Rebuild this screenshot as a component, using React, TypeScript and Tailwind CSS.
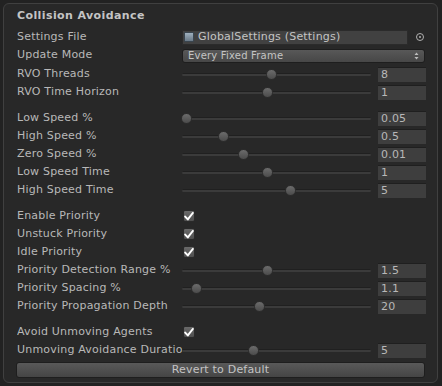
import React from 'react';

type Row =
  | { kind: 'slider'; label: string; value: string; thumb: number }
  | { kind: 'check'; label: string };

const groups: Row[][] = [
  [
    { kind: 'slider', label: 'Low Speed %', value: '0.05', thumb: 186 },
    { kind: 'slider', label: 'High Speed %', value: '0.5', thumb: 223 },
    { kind: 'slider', label: 'Zero Speed %', value: '0.01', thumb: 243 },
    { kind: 'slider', label: 'Low Speed Time', value: '1', thumb: 267 },
    { kind: 'slider', label: 'High Speed Time', value: '5', thumb: 290 },
  ],
  [
    { kind: 'check', label: 'Enable Priority' },
    { kind: 'check', label: 'Unstuck Priority' },
    { kind: 'check', label: 'Idle Priority' },
    { kind: 'slider', label: 'Priority Detection Range %', value: '1.5', thumb: 267 },
    { kind: 'slider', label: 'Priority Spacing %', value: '1.1', thumb: 196 },
    { kind: 'slider', label: 'Priority Propagation Depth', value: '20', thumb: 259 },
  ],
  [
    { kind: 'check', label: 'Avoid Unmoving Agents' },
    { kind: 'slider', label: 'Unmoving Avoidance Duratio', value: '5', thumb: 253 },
  ],
];

function Label({ children }: { children: React.ReactNode }) {
  return <div className="w-[165px] shrink-0 overflow-hidden whitespace-nowrap">{children}</div>;
}

function Slider({ value, thumb }: { value: string; thumb: number }) {
  return (
    <div className="flex items-center">
      <div className="relative w-[189px] h-[10px] flex items-center">
        <div className="w-full h-[3px] rounded-full bg-[#3b3b3b] border-t border-[#202020]" />
        <div
          className="absolute top-0 w-[11px] h-[11px] rounded-full border border-[#2e2e2e] bg-gradient-to-b from-[#6c6c6c] to-[#4c4c4c]"
          style={{ left: thumb - 182 - 5.5 }}
        />
      </div>
      <div className="ml-[7px] w-[48px] h-[15px] bg-[#3e3e3e] border-t border-[#1f1f1f] pl-[3px] leading-[14px] text-[#b8b8b8]">
        {value}
      </div>
    </div>
  );
}

function Check() {
  return (
    <div className="ml-[1px] w-[12px] h-[12px] rounded-[2px] border border-[#2a2a2a] bg-gradient-to-b from-[#6a6a6a] to-[#4f4f4f] flex items-center justify-center">
      <svg width="10" height="9" viewBox="0 0 10 9">
        <path d="M1.2 4.6 L3.8 7.4 L8.8 1" stroke="#ffffff" strokeWidth="2" fill="none" strokeLinecap="round" strokeLinejoin="round" />
      </svg>
    </div>
  );
}

function FieldRow({ row }: { row: Row }) {
  return (
    <div className="h-[18px] flex items-center">
      <Label>{row.label}</Label>
      {row.kind === 'slider' ? <Slider value={row.value} thumb={row.thumb} /> : <Check />}
    </div>
  );
}

export default function App() {
  return (
    <div
      className="w-[442px] h-[386px] bg-[#222222] p-[3px] text-[11px] tracking-[0.2px] text-[#b8b8b8]"
      style={{ fontFamily: '"DejaVu Sans", Verdana, sans-serif' }}
    >
      <div className="h-[380px] w-[435px] rounded-[6px] border border-[#404040] bg-[#282828] pl-[13px] pt-[3px]">
        <div className="h-[18px] flex items-center font-bold tracking-[0.4px] text-[#c4c4c4]">Collision Avoidance</div>

        <div className="mt-[3px] h-[18px] flex items-center">
          <Label>Settings File</Label>
          <div className="w-[226px] h-[15px] bg-[#414141] border border-[#2b2b2b] flex items-center pl-[1px]">
            <div className="w-[10px] h-[10px] rounded-[1px] bg-gradient-to-b from-[#9fb0be] to-[#6a7a88] border border-[#3a4650]" />
            <span className="ml-[4px] text-[#c4c4c4] whitespace-nowrap">GlobalSettings (Settings)</span>
          </div>
          <div className="ml-[8px] w-[8px] h-[8px] rounded-full border border-[#b0b0b0] flex items-center justify-center">
            <div className="w-[2px] h-[2px] rounded-full bg-[#b0b0b0]" />
          </div>
        </div>

        <div className="h-[19px] flex items-center">
          <Label>Update Mode</Label>
          <div className="w-[243px] h-[14px] rounded-[3px] border border-[#1e1e1e] bg-gradient-to-b from-[#585858] to-[#474747] flex items-center justify-between pl-[5px] pr-[5px] text-[10px] text-[#c4c4c4]">
            <span className="whitespace-nowrap">Every Fixed Frame</span>
            <svg width="5" height="8" viewBox="0 0 5 8">
              <path d="M0.5 3 L2.5 0.5 L4.5 3 Z M0.5 5 L2.5 7.5 L4.5 5 Z" fill="#bdbdbd" />
            </svg>
          </div>
        </div>

        <FieldRow row={{ kind: 'slider', label: 'RVO Threads', value: '8', thumb: 271 }} />
        <FieldRow row={{ kind: 'slider', label: 'RVO Time Horizon', value: '1', thumb: 267 }} />

        {groups.map((g, i) => (
          <div key={i} className="mt-[8px]">
            {g.map((r) => (
              <FieldRow key={r.label} row={r} />
            ))}
          </div>
        ))}

        <div className="mt-[3px] w-[409px] h-[16px] ml-[-1px] rounded-[3px] border border-[#1e1e1e] bg-gradient-to-b from-[#595959] to-[#454545] flex items-center justify-center text-[#c4c4c4]">
          Revert to Default
        </div>
      </div>
    </div>
  );
}
